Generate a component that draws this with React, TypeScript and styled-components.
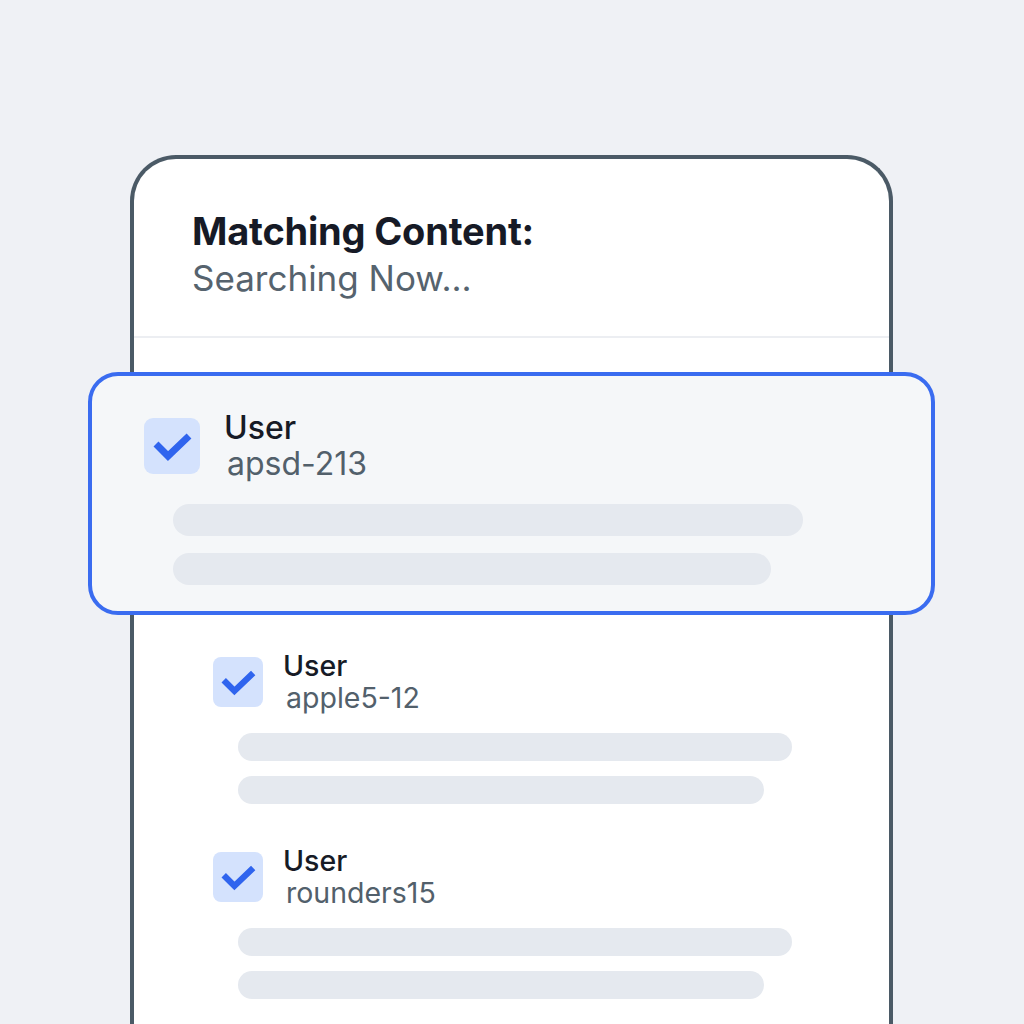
import React from 'react'
import styled, { createGlobalStyle } from 'styled-components'

const GlobalStyle = createGlobalStyle`
  html, body {
    margin: 0;
    padding: 0;
    background: #eff1f5;
    font-family: Inter, 'Noto Sans', sans-serif;
  }
`

const Stage = styled.div`
  height: 1024px;
  overflow: hidden;
  padding-top: 155px;
  box-sizing: border-box;
`

const Phone = styled.div`
  margin-left: 130px;
  width: 763px;
  min-height: 1000px;
  box-sizing: border-box;
  background: #ffffff;
  border: 4px solid #4b5a66;
  border-bottom: none;
  border-radius: 46px 46px 0 0;
`

const Header = styled.div`
  padding: 52px 0 38px 58px;
  border-bottom: 2px solid #eceef2;
`

const Title = styled.div`
  font-size: 38px;
  line-height: 40px;
  font-weight: 700;
  color: #161a26;
  letter-spacing: -0.2px;
`

const Subtitle = styled.div`
  margin-top: 7px;
  font-size: 35px;
  line-height: 40px;
  font-weight: 400;
  color: #56636e;
`

const List = styled.div`
  padding-top: 34px;
`

const Card = styled.div`
  margin: 0 -46px 35px;
  padding: 34px 0 26px 52px;
  background: #f5f7f9;
  border: 4px solid #3a6cf0;
  border-radius: 30px;
`

const Entry = styled.div`
  padding: 0 0 41px 79px;
`

const Head = styled.div`
  display: flex;
  align-items: center;
`

const Box = styled.div<{ $size: number }>`
  flex: none;
  width: ${p => p.$size}px;
  height: ${p => p.$size}px;
  border-radius: ${p => (p.$size > 52 ? 9 : 8)}px;
  background: #d4e2fd;
  display: flex;
  align-items: center;
  justify-content: center;
  svg {
    width: ${p => p.$size}px;
    height: ${p => p.$size}px;
  }
`

const Labels = styled.div<{ $large?: boolean }>`
  margin-left: ${p => (p.$large ? 24 : 20)}px;
  font-size: ${p => (p.$large ? 32 : 28.5)}px;
  line-height: ${p => (p.$large ? 36 : 32)}px;
`

const Name = styled.div`
  font-weight: 500;
  color: #171b26;
`

const Handle = styled.div`
  font-weight: 400;
  color: #52606b;
  padding-left: 3px;
`

const Bars = styled.div<{ $large?: boolean }>`
  display: flex;
  flex-direction: column;
  gap: ${p => (p.$large ? 17 : 15)}px;
  margin-top: ${p => (p.$large ? 22 : 19)}px;
  margin-left: ${p => (p.$large ? 29 : 25)}px;
`

const Bar = styled.div<{ $w: number; $h: number }>`
  width: ${p => p.$w}px;
  height: ${p => p.$h}px;
  border-radius: ${p => p.$h / 2}px;
  background: #e5e9ef;
`

const Check = () => (
  <svg viewBox="0 0 56 56" fill="none">
    <path d="M12 26 L24 38 L45 18" stroke="#2f64ee" strokeWidth="7" strokeLinejoin="miter" />
  </svg>
)

type Item = { handle: string; large?: boolean }

const UserRow = ({ handle, large }: Item) => (
  <>
    <Head>
      <Box $size={large ? 56 : 50}>
        <Check />
      </Box>
      <Labels $large={large}>
        <Name>User</Name>
        <Handle>{handle}</Handle>
      </Labels>
    </Head>
    <Bars $large={large}>
      <Bar $w={large ? 630 : 554} $h={large ? 32 : 28} />
      <Bar $w={large ? 598 : 526} $h={large ? 32 : 28} />
    </Bars>
  </>
)

const others = ['apple5-12', 'rounders15']

export default function App() {
  return (
    <Stage>
      <GlobalStyle />
      <Phone>
        <Header>
          <Title>Matching Content:</Title>
          <Subtitle>Searching Now...</Subtitle>
        </Header>
        <List>
          <Card>
            <UserRow handle="apsd-213" large />
          </Card>
          {others.map(h => (
            <Entry key={h}>
              <UserRow handle={h} />
            </Entry>
          ))}
        </List>
      </Phone>
    </Stage>
  )
}
